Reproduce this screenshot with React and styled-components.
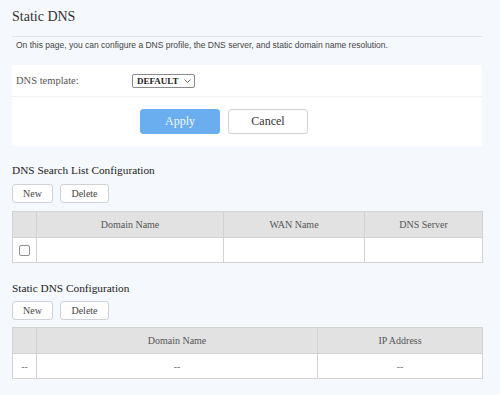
import styled, { createGlobalStyle } from "styled-components";

const GlobalStyle = createGlobalStyle`
  html, body {
    margin: 0;
    padding: 0;
    background: #f5f8fd;
  }
  body {
    font-family: "Liberation Serif", "Times New Roman", serif;
    color: #333;
  }
`;

const Page = styled.div`
  width: 470px;
  padding: 0 18px 0 12px;
`;

const Header = styled.div`
  padding: 8px 0 10px;
  border-bottom: 1px solid #dfe3e8;
`;

const Title = styled.h1`
  margin: 0;
  font-family: "Liberation Serif", "Times New Roman", serif;
  font-size: 14px;
  line-height: 18px;
  font-weight: normal;
  color: #333;
`;

const Description = styled.p`
  margin: 0 0 12px;
  padding-left: 4px;
  font-family: "Liberation Sans", Arial, sans-serif;
  font-size: 8.5px;
  line-height: 16px;
  color: #444;
`;

const Panel = styled.div`
  background: #fff;
`;

const FormRow = styled.div`
  display: flex;
  align-items: center;
  height: 31px;
  padding-left: 4px;
  border-bottom: 1px solid #eef0f3;
`;

const Label = styled.span`
  width: 116px;
  font-size: 10.5px;
  color: #555;
`;

const SelectWrap = styled.div`
  position: relative;
  width: 63px;
  height: 14px;
`;

const Select = styled.select`
  appearance: none;
  -webkit-appearance: none;
  display: block;
  width: 63px;
  height: 14px;
  margin: 0;
  padding: 0 0 0 4px;
  font-family: "Liberation Serif", "Times New Roman", serif;
  font-size: 9px;
  font-weight: bold;
  line-height: 12px;
  color: #222;
  border: 1px solid #8a8a8a;
  border-radius: 2px;
  background: #fff;
  outline: none;
`;

const Chevron = styled.svg`
  position: absolute;
  right: 4px;
  top: 5px;
  width: 7px;
  height: 4px;
  pointer-events: none;
`;

const ActionRow = styled.div`
  display: flex;
  gap: 8px;
  padding: 12px 0 12px 128px;
`;

const ActionButton = styled.button`
  width: 80px;
  height: 25px;
  font-family: "Liberation Serif", "Times New Roman", serif;
  font-size: 12px;
  border-radius: 3px;
  cursor: pointer;
  border: 1px solid ${(p) => (p.$primary ? "#6aaef0" : "#cfd3d8")};
  background: ${(p) => (p.$primary ? "#6aaef0" : "#fff")};
  color: ${(p) => (p.$primary ? "#f4f8ff" : "#333")};
`;

const SectionTitle = styled.h2`
  margin: ${(p) => p.$top}px 0 0;
  font-size: 11.3px;
  line-height: 16px;
  font-weight: normal;
  color: #222;
`;

const ButtonBar = styled.div`
  display: flex;
  gap: 7px;
  margin-top: ${(p) => p.$top}px;
`;

const SmallButton = styled.button`
  height: 19px;
  padding: 0;
  width: ${(p) => p.$w}px;
  font-family: "Liberation Serif", "Times New Roman", serif;
  font-size: 10px;
  color: #444;
  background: #fff;
  border: 1px solid #cfd3d8;
  border-radius: 3px;
`;

const Table = styled.table`
  width: 470px;
  margin-top: ${(p) => p.$top}px;
  border-collapse: collapse;
  table-layout: fixed;
  background: #fff;
`;

const Th = styled.th`
  height: 25px;
  padding: 0;
  background: #e2e2e2;
  border: 1px solid #d2d2d2;
  font-size: 10px;
  font-weight: normal;
  color: #555;
`;

const Td = styled.td`
  height: 24px;
  padding: 0;
  border: 1px solid #d2d2d2;
  text-align: center;
  font-size: 10px;
  color: #777;
`;

const Check = styled.span`
  display: inline-block;
  width: 9px;
  height: 9px;
  border: 1px solid #8f8f8f;
  border-radius: 2px;
  background: #fff;
  vertical-align: middle;
`;

export default function App() {
  return (
    <Page>
      <GlobalStyle />
      <Header>
        <Title>Static DNS</Title>
      </Header>
      <Description>
        On this page, you can configure a DNS profile, the DNS server, and
        static domain name resolution.
      </Description>
      <Panel>
        <FormRow>
          <Label>DNS template:</Label>
          <SelectWrap>
            <Select defaultValue="DEFAULT">
              <option>DEFAULT</option>
            </Select>
            <Chevron viewBox="0 0 7 4">
              <path d="M0.5 0.5 L3.5 3.5 L6.5 0.5" fill="none" stroke="#555" strokeWidth="0.9" />
            </Chevron>
          </SelectWrap>
        </FormRow>
        <ActionRow>
          <ActionButton $primary>Apply</ActionButton>
          <ActionButton>Cancel</ActionButton>
        </ActionRow>
      </Panel>

      <SectionTitle $top={16}>DNS Search List Configuration</SectionTitle>
      <ButtonBar $top={6}>
        <SmallButton $w={41}>New</SmallButton>
        <SmallButton $w={49}>Delete</SmallButton>
      </ButtonBar>
      <Table $top={8}>
        <colgroup>
          <col style={{ width: 24 }} />
          <col style={{ width: 187 }} />
          <col style={{ width: 141 }} />
          <col style={{ width: 118 }} />
        </colgroup>
        <thead>
          <tr>
            <Th />
            <Th>Domain Name</Th>
            <Th>WAN Name</Th>
            <Th>DNS Server</Th>
          </tr>
        </thead>
        <tbody>
          <tr>
            <Td>
              <Check />
            </Td>
            <Td />
            <Td />
            <Td />
          </tr>
        </tbody>
      </Table>

      <SectionTitle $top={17}>Static DNS Configuration</SectionTitle>
      <ButtonBar $top={5}>
        <SmallButton $w={41}>New</SmallButton>
        <SmallButton $w={49}>Delete</SmallButton>
      </ButtonBar>
      <Table $top={7}>
        <colgroup>
          <col style={{ width: 24 }} />
          <col style={{ width: 281 }} />
          <col style={{ width: 165 }} />
        </colgroup>
        <thead>
          <tr>
            <Th />
            <Th>Domain Name</Th>
            <Th>IP Address</Th>
          </tr>
        </thead>
        <tbody>
          <tr>
            <Td>--</Td>
            <Td>--</Td>
            <Td>--</Td>
          </tr>
        </tbody>
      </Table>
    </Page>
  );
}
